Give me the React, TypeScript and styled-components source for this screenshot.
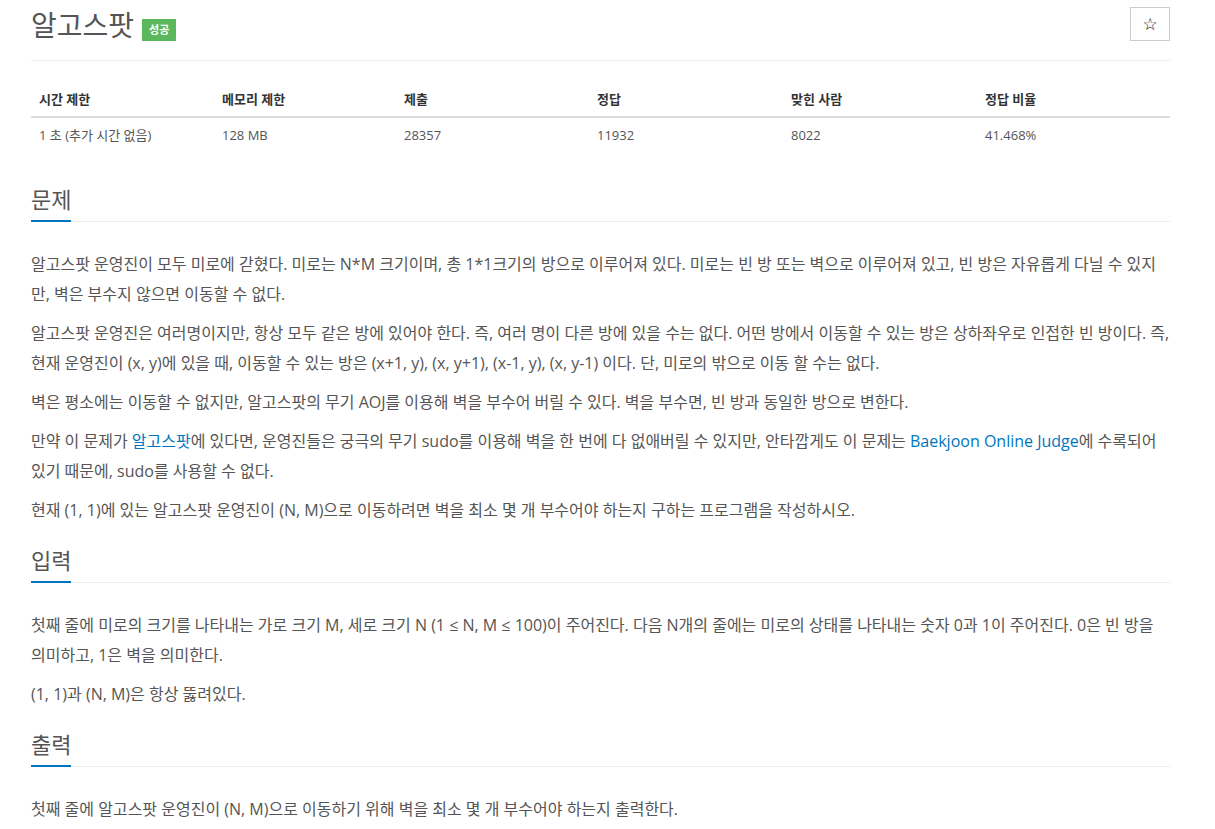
import React from "react";
import styled, { createGlobalStyle } from "styled-components";

const GlobalStyle = createGlobalStyle`
  body {
    margin: 0;
    background: #fff;
    font-family: "Open Sans", "Noto Sans CJK KR", sans-serif;
    color: #555;
  }
  * {
    box-sizing: border-box;
  }
`;

const Page = styled.div`
  width: 1170px;
  padding-left: 31px;
`;

const PageHeader = styled.div`
  display: flex;
  align-items: flex-start;
  height: 61px;
  border-bottom: 1px solid #eee;
`;

const Title = styled.h1`
  margin: 6px 0 0;
  font-size: 28px;
  font-weight: 400;
  line-height: 38px;
  color: #555;
`;

const Badge = styled.span`
  display: inline-block;
  margin: 19px 0 0 8px;
  height: 22px;
  padding: 0 7px;
  line-height: 22px;
  background: #5cb85c;
  color: #fff;
  font-size: 11px;
  font-weight: 700;
`;

const StarButton = styled.button`
  margin: 7px 0 0 auto;
  width: 40px;
  height: 34px;
  border: 1px solid #ccc;
  background: #fff;
  color: #111;
  font-size: 17px;
  padding: 0;
  font-family: "DejaVu Sans", sans-serif;
`;

const InfoTable = styled.table`
  width: 100%;
  margin: 21px 0 30px;
  border-collapse: collapse;
  font-size: 13px;
  line-height: 18px;
  table-layout: fixed;
`;

const Th = styled.th<{ $w: number }>`
  width: ${({ $w }) => $w}px;
  text-align: left;
  padding: 8px;
  color: #333;
  font-weight: 700;
  border-bottom: 2px solid #ddd;
`;

const Td = styled.td`
  padding: 8px;
  color: #555;
`;

const Section = styled.section`
  margin-top: 18px;
`;

const HeadlineWrap = styled.div`
  border-bottom: 1px dotted #d6dde6;
  margin-bottom: 27px;
`;

const Headline = styled.h2`
  display: inline-block;
  margin: 0 0 -1px;
  padding-bottom: 4px;
  font-size: 22px;
  font-weight: 400;
  line-height: 34px;
  color: #555;
  border-bottom: 2px solid #0076c0;
`;

const Text = styled.div`
  font-size: 16px;
  line-height: 30px;
  word-break: break-all;
  p {
    margin: 0 0 9px;
  }
`;

const Link = styled.a`
  color: #0076c0;
  text-decoration: none;
`;

const columns = [
  { label: "시간 제한", value: "1 초 (추가 시간 없음)", w: 183 },
  { label: "메모리 제한", value: "128 MB", w: 182 },
  { label: "제출", value: "28357", w: 193 },
  { label: "정답", value: "11932", w: 194 },
  { label: "맞힌 사람", value: "8022", w: 194 },
  { label: "정답 비율", value: "41.468%", w: 193 },
];

export default function App() {
  return (
    <Page>
      <GlobalStyle />
      <PageHeader>
        <Title>알고스팟</Title>
        <Badge>성공</Badge>
        <StarButton>☆</StarButton>
      </PageHeader>

      <InfoTable>
        <thead>
          <tr>
            {columns.map((c) => (
              <Th key={c.label} $w={c.w}>
                {c.label}
              </Th>
            ))}
          </tr>
        </thead>
        <tbody>
          <tr>
            {columns.map((c) => (
              <Td key={c.label}>{c.value}</Td>
            ))}
          </tr>
        </tbody>
      </InfoTable>

      <Section>
        <HeadlineWrap>
          <Headline>문제</Headline>
        </HeadlineWrap>
        <Text>
          <p>
            알고스팟 운영진이 모두 미로에 갇혔다. 미로는 N*M 크기이며, 총 1*1크기의 방으로 이루어져 있다. 미로는 빈 방 또는 벽으로 이루어져 있고, 빈 방은 자유롭게 다닐 수 있지만, 벽은 부수지 않으면 이동할 수 없다.
          </p>
          <p>
            알고스팟 운영진은 여러명이지만, 항상 모두 같은 방에 있어야 한다. 즉, 여러 명이 다른 방에 있을 수는 없다. 어떤 방에서 이동할 수 있는 방은 상하좌우로 인접한 빈 방이다. 즉, 현재 운영진이 (x, y)에 있을 때, 이동할 수 있는 방은 (x+1, y), (x, y+1), (x-1, y), (x, y-1) 이다. 단, 미로의 밖으로 이동 할 수는 없다.
          </p>
          <p>
            벽은 평소에는 이동할 수 없지만, 알고스팟의 무기 AOJ를 이용해 벽을 부수어 버릴 수 있다. 벽을 부수면, 빈 방과 동일한 방으로 변한다.
          </p>
          <p>
            만약 이 문제가 <Link>알고스팟</Link>에 있다면, 운영진들은 궁극의 무기 sudo를 이용해 벽을 한 번에 다 없애버릴 수 있지만, 안타깝게도 이 문제는 <Link>Baekjoon Online Judge</Link>에 수록되어 있기 때문에, sudo를 사용할 수 없다.
          </p>
          <p>
            현재 (1, 1)에 있는 알고스팟 운영진이 (N, M)으로 이동하려면 벽을 최소 몇 개 부수어야 하는지 구하는 프로그램을 작성하시오.
          </p>
        </Text>
      </Section>

      <Section>
        <HeadlineWrap>
          <Headline>입력</Headline>
        </HeadlineWrap>
        <Text>
          <p>
            첫째 줄에 미로의 크기를 나타내는 가로 크기 M, 세로 크기 N (1 ≤ N, M ≤ 100)이 주어진다. 다음 N개의 줄에는 미로의 상태를 나타내는 숫자 0과 1이 주어진다. 0은 빈 방을 의미하고, 1은 벽을 의미한다.
          </p>
          <p>(1, 1)과 (N, M)은 항상 뚫려있다.</p>
        </Text>
      </Section>

      <Section>
        <HeadlineWrap>
          <Headline>출력</Headline>
        </HeadlineWrap>
        <Text>
          <p>첫째 줄에 알고스팟 운영진이 (N, M)으로 이동하기 위해 벽을 최소 몇 개 부수어야 하는지 출력한다.</p>
        </Text>
      </Section>
    </Page>
  );
}
